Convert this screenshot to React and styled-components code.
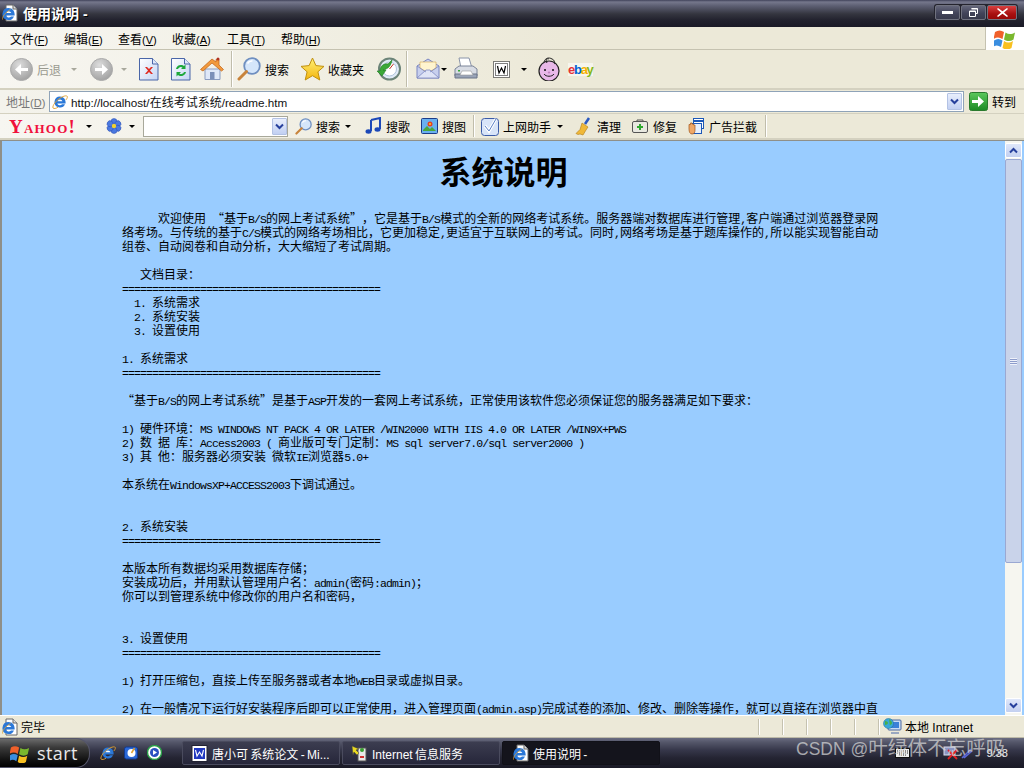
import React from "react";
import styled, { createGlobalStyle } from "styled-components";

const Global = createGlobalStyle`
  html, body { margin: 0; padding: 0; width: 1024px; height: 768px; overflow: hidden; background: #ece9d8; }
  * { box-sizing: border-box; }
`;

const UI = `"Liberation Sans", "Noto Sans CJK SC", sans-serif`;
const Win = styled.div`
  position: relative; width: 1024px; height: 768px; display: flex; flex-direction: column;
  font-family: ${UI}; font-size: 12px; color: #000; overflow: hidden;
`;
const TitleBar = styled.div`
  height: 27px; flex: none; display: flex; align-items: center; padding: 0 5px 2px 2px;
  background: linear-gradient(#40425a 0, #75778c 2px, #5c5e72 6px, #34353f 14px, #22222e 20px, #1a1a26 100%);
`;
const TitleText = styled.span`
  margin-left: 5px; color: #fff; font-weight: 700; font-size: 14px; text-shadow: 1px 1px 0 #000; flex: 1;
`;
const WinButtons = styled.div`display: flex; gap: 1px; margin-right: 1px; padding: 1px; background: #24242e; border-radius: 3px;`;
const WinBtn = styled.div`
  width: ${p => p.$w}px; height: 15px; border-radius: 2px; display: flex; align-items: center; justify-content: center;
  border: 1px solid #70727f;
  background: ${p => p.$red ? "linear-gradient(#d84040,#a81010 60%,#980808)" : "linear-gradient(#64667a,#42445a 55%,#383a4c)"};
`;
const MenuBar = styled.div`
  height: 23px; flex: none; display: flex; align-items: center; padding-left: 10px;
  background: linear-gradient(90deg, #f7f6f1, #ece9d8 55%); border-bottom: 1px solid #c5c2b0;
`;
const MenuItem = styled.span`width: ${p => p.$w}px; flex: none;`;
const KeyHint = styled.span`font-size: 11px; color: inherit;`;
const FlagCell = styled.div`
  margin-left: auto; width: 39px; height: 23px; background: #fff; border-left: 1px solid #c5c2b0;
  display: flex; align-items: center; justify-content: center;
`;
const ToolBar = styled.div`
  height: 40px; flex: none; display: flex; align-items: center; border-bottom: 2px solid #d4d1c0;
  background: linear-gradient(90deg, #f7f6f1, #ece9d8 55%);
`;
const Tool = styled.div`
  margin-left: ${p => p.$ml || 0}px; flex: none; display: flex; align-items: center; gap: ${p => p.$gap ?? 5}px;
  color: ${p => p.$dim ? "#9a9a90" : "#000"};
`;
const Sep = styled.div`
  margin-left: ${p => p.$ml || 0}px; width: 2px; height: ${p => p.$h || 36}px; flex: none;
  border-left: 1px solid #c0bdab; border-right: 1px solid #fff;
`;
const Caret = styled.div`
  margin-left: ${p => p.$ml || 0}px; flex: none; width: 0; height: 0;
  border-left: 3px solid transparent; border-right: 3px solid transparent;
  border-top: 3px solid ${p => p.$dim ? "#a8a89c" : "#000"};
`;
const AddressBar = styled.div`
  height: 24px; flex: none; display: flex; align-items: center; padding-left: 6px;
  background: linear-gradient(90deg, #f4f3ec, #ece9d8 55%); border-bottom: 1px solid #d4d1c0;
`;
const AddrLabel = styled.span`color: #777; width: 43px; flex: none;`;
const AddrBox = styled.div`
  width: 915px; height: 21px; flex: none; display: flex; align-items: center; background: #fff;
  border: 1px solid #8fa3b8; padding: 0 1px 0 2px;
`;
const UrlText = styled.span`margin-left: 3px; flex: 1; font-size: 12px; color: #111;`;
const UrlLatin = styled.span`font-size: 11.7px;`;
const DropBtn = styled.div`
  width: 15px; height: 17px; flex: none; display: flex; align-items: center; justify-content: center;
  background: linear-gradient(#e8eefc, #c2d0f2); border: 1px solid #b3c2e4; border-radius: 1px;
`;
const LinkBar = styled.div`
  height: 26px; flex: none; display: flex; align-items: center; border-bottom: 2px solid #d4d1c0;
  background: linear-gradient(90deg, #f7f6f1, #ece9d8 55%);
`;
const Yahoo = styled.span`
  margin-left: 9px; width: 70px; flex: none; font-family: "Liberation Serif", serif; font-size: 19px; line-height: 1;
  color: #f0103c; font-weight: 700; font-variant: small-caps; letter-spacing: 1.2px; white-space: nowrap;
`;
const Small = styled.span`font-size: 12px;`;
const SearchBox = styled.div`
  margin-left: ${p => p.$ml}px; width: 145px; height: 21px; flex: none; background: #fff; border: 1px solid #a8a89a;
  display: flex; align-items: center; justify-content: flex-end; padding-right: 0;
`;
const Main = styled.div`
  height: 575px; flex: none; display: flex; background: #99ccff;
  border-left: 2px solid #8f8f88; border-top: 1px solid #8f8f88;
`;
const Page = styled.div`
  flex: 1; overflow: hidden; padding-left: 120px; white-space: pre;
`;
const Heading = styled.h1`
  margin: 8px 0 20px -120px; text-align: center; height: 42px; line-height: 42px; font-size: 32px; font-weight: 700;
  font-family: "Noto Sans CJK SC", sans-serif; color: #000;
`;
const Line = styled.div`
  height: 14px; line-height: 14px; font-size: 12px; color: #000; font-family: "Noto Sans CJK SC", sans-serif;
`;
const Latin = styled.span`font-family: "Liberation Mono", monospace; font-size: 11.5px; letter-spacing: -0.9px;`;
const Full = styled.span`display: inline-block; width: 12px; text-align: ${p => p.$a};`;
const Scroll = styled.div`
  width: 17px; flex: none; margin-right: 2px; display: flex; flex-direction: column; background: #f6f6f0; padding: 2px 0 2px;
`;
const ScrollBtn = styled.div`
  height: 15px; flex: none; border: 1px solid #fff; background: linear-gradient(#dfe7fa, #c3d0f0); border-radius: 2px;
  display: flex; align-items: center; justify-content: center;
`;
const Track = styled.div`flex: 1; display: flex; flex-direction: column; padding-top: 1px;`;
const Thumb = styled.div`
  height: 404px; flex: none; border: 1px solid #9aa8d2; border-radius: 2px; background: #c9d3ea;
  display: flex; align-items: center; justify-content: center;
`;
const Grip = styled.div`width: 7px; height: 7px; background: repeating-linear-gradient(#eef1fa 0 1px, #8d9ccb 1px 2px);`;
const Status = styled.div`
  height: 23px; flex: none; display: flex; align-items: center; padding-left: 2px; background: #ece9d8;
  border-top: 1px solid #fff; border-bottom: 1px solid #bdbaa8;
`;
const StatusText = styled.span`margin-left: 3px; width: 737px; flex: none;`;
const StatusCell = styled.div`
  width: 24px; height: 16px; flex: none; border-left: 1px solid #c5c2b0; box-shadow: inset 1px 0 0 #fff;
`;
const Taskbar = styled.div`
  flex: 1; display: flex; align-items: center;
  background: linear-gradient(#6a6c80 0, #55576a 4px, #36374a 12px, #242432 20px, #1a1a26 100%);
`;
const StartBtn = styled.div`
  width: 90px; height: 30px; flex: none; display: flex; align-items: center; padding-left: 10px; gap: 7px;
  border-radius: 0 14px 14px 0; border: 1px solid #55566a; border-left: 0;
  background: linear-gradient(#6a6a6a, #3a3a3a 30%, #111 75%, #000);
  color: #e8e8e8; font-family: "Open Sans", sans-serif; font-size: 18px; letter-spacing: .4px;
`;
const Quick = styled.div`margin-left: 10px; width: 82px; flex: none; display: flex; gap: 8px;`;
const Task = styled.div`
  width: 158px; height: 24px; flex: none; margin-right: 2px; display: flex; align-items: center; padding-left: ${p => p.$active ? 10 : 8}px; gap: 4px;
  border: 1px solid ${p => p.$active ? "#111118" : "#4a4b5e"}; border-radius: 2px; color: #fff; font-size: 12px; white-space: nowrap; overflow: hidden; word-spacing: -1px;
  background: ${p => p.$active ? "#14141c" : "linear-gradient(#3c3d50,#26263a)"};
`;
const Tray = styled.div`margin-left: auto; display: flex; align-items: center; color: #eee; font-size: 11px; padding-right: 16px;`;
const TrayGap = styled.div`width: ${p => p.$w}px; flex: none;`;
const Watermark = styled.div`
  position: absolute; left: 796px; top: 736px; font-size: 17.5px; line-height: 24px; color: rgba(215,215,215,.72); white-space: nowrap;
  font-family: "Liberation Sans", "Noto Sans CJK SC", sans-serif;
`;
const WatermarkCjk = styled.span`font-size: 19.6px;`;

/* ---------- drawn icons ---------- */
const IE = ({ s = 16 }) => (
  <svg width={s} height={s} viewBox="0 0 16 16">
    <path d="M2 8.500h9.500C11.500 6 10 4.800 8 4.800 5.600 4.800 3.800 6.300 2.700 8.300" fill="#fff" />
    <path d="M8 2.500a5.500 5.500 0 1 0 5 7.800h-3a2.700 2.700 0 0 1-4.700-.9h8.300c.4-3.800-2-6.900-5.600-6.900zM5.500 7.200a2.700 2.700 0 0 1 5 0z" fill="#2b78d8" fillRule="evenodd" />
    <path d="M1 14c-1-2 3-8 9-11 3-1.500 5-1.500 5.300-.5.300 1-.4 2.300-1.500 3.500M1 14c1 1 3 .5 5-.8" fill="none" stroke="#e0a030" strokeWidth=".9" />
  </svg>
);
const PageIE = () => (
  <svg width="16" height="18" viewBox="0 0 16 18">
    <path d="M4 1h7l4 4v12H4z" fill="#fff" stroke="#666" />
    <path d="M11 1v4h4" fill="#ddd" stroke="#666" />
    <path d="M6.500 4a6 6 0 1 0 5.500 8.400H9a3 3 0 0 1-5.200-1h8.800C13 7.300 10.500 4 6.500 4zM3.900 9a3 3 0 0 1 5.400 0z" fill="#2b78d8" fillRule="evenodd" />
    <path d="M.5 15.500c-.8-2 3-7.500 8-10" fill="none" stroke="#e0a030" strokeWidth=".8" />
  </svg>
);
const Circle = ({ flip }) => (
  <svg width="23" height="23" viewBox="0 0 23 23">
    <defs><radialGradient id={flip ? "cf" : "cb"} cx=".4" cy=".3" r=".8"><stop offset="0" stopColor="#ddd" /><stop offset="1" stopColor="#9a9a9a" /></radialGradient></defs>
    <circle cx="11.500" cy="11.500" r="11" fill={`url(#${flip ? "cf" : "cb"})`} stroke="#aaa" />
    <path d={flip ? "M5 10h7V6l6 5.500-6 5.500v-4H5z" : "M18 10h-7V6l-6 5.500 6 5.500v-4h7z"} fill="#fff" />
  </svg>
);
const Doc = ({ children }) => (
  <svg width="20" height="24" viewBox="0 0 20 24">
    <defs><linearGradient id="dg" x1="0" y1="0" x2="1" y2="1"><stop offset="0" stopColor="#fff" /><stop offset="1" stopColor="#c4d4f4" /></linearGradient></defs>
    <path d="M.5 1.500h13l5.500 5.500v16H.5z" fill="url(#dg)" stroke="#4a66a8" />
    <path d="M13.500 1.500v5.500H19" fill="#dfe7fa" stroke="#4a66a8" />
    {children}
  </svg>
);
const Home = () => (
  <svg width="24" height="24" viewBox="0 0 24 24">
    <path d="M5 12v10.500h15V12z" fill="#dfe8f8" stroke="#8a9cc0" />
    <path d="M10 15h4.500v7.500H10z" fill="#7b8fb8" />
    <path d="M0.500 12.500 12 2l4 3V2.500h3v5.500l4.500 4.500-2 1.500L12 6 3 14z" fill="#f29a3c" stroke="#c46a1e" strokeWidth=".8" />
    <circle cx="18" cy="2" r="1.500" fill="#b03020" />
  </svg>
);
const Magnifier = ({ s = 24 }) => (
  <svg width={s} height={s} viewBox="0 0 24 24">
    <circle cx="15" cy="9" r="7.800" fill="#d5e6fa" stroke="#6f8fc0" strokeWidth="1.800" />
    <path d="M10.500 6.500a5 5 0 0 1 5-2.500" stroke="#fff" strokeWidth="1.600" fill="none" />
    <path d="M9.500 14.500 2 22" stroke="#c8843c" strokeWidth="3" strokeLinecap="round" />
  </svg>
);
const Star = () => (
  <svg width="25" height="24" viewBox="0 0 25 24">
    <defs><linearGradient id="st" x1="0" y1="0" x2="0" y2="1"><stop offset="0" stopColor="#fff27a" /><stop offset="1" stopColor="#f4b40c" /></linearGradient></defs>
    <path d="M12.500 1l3.400 7.600 8.100.8-6.100 5.400 1.900 8.200-7.300-4.300-7.300 4.300 1.900-8.200L1 9.400l8.100-.8z" fill="url(#st)" stroke="#c09010" />
  </svg>
);
const History = () => (
  <svg width="25" height="24" viewBox="0 0 25 24">
    <circle cx="13.500" cy="12" r="10.500" fill="#e0eaf6" stroke="#6c8478" strokeWidth="2" />
    <circle cx="13.500" cy="12" r="7" fill="#fff" stroke="#b0c4dc" />
    <path d="M13.500 12l4-5" stroke="#c03020" strokeWidth="1" />
    <path d="M1 14h3c0-5 4-8 8-7l4-4c-1 6-4 9-9 10h3l-4 6z" fill="#3aa838" stroke="#1e7a22" strokeWidth=".6" />
  </svg>
);
const Mail = () => (
  <svg width="24" height="24" viewBox="0 0 24 24">
    <path d="M1 9l11-7 11 7v12H1z" fill="#c8d0ee" stroke="#7b86c0" />
    <path d="M4 11V5h16v6l-8 5z" fill="#fff4cf" stroke="#d8b060" strokeWidth=".7" />
    <path d="M1 21l9-8h4l9 8zM1 9l9 6M23 9l-9 6" fill="#dfe4f6" stroke="#7b86c0" strokeWidth=".8" />
  </svg>
);
const Printer = () => (
  <svg width="24" height="24" viewBox="0 0 24 24">
    <path d="M5 1h10l3 10H7z" fill="#fff" stroke="#8a94a8" />
    <path d="M1 12l4-3h14l4 3v7H1z" fill="#d8dce4" stroke="#7a8498" />
    <path d="M1 17h22v4H1z" fill="#9aa4b8" stroke="#6a7488" />
    <path d="M6 18l2-4h9l2 4z" fill="#fff" stroke="#999" strokeWidth=".6" />
    <rect x="4" y="13" width="2" height="1.500" fill="#3aa838" />
  </svg>
);
const WordBox = () => (
  <svg width="17" height="17" viewBox="0 0 17 17">
    <rect x=".5" y=".5" width="16" height="16" fill="#fff" stroke="#000" strokeDasharray="1 1" />
    <rect x="2.500" y="2.500" width="12" height="12" fill="#fff" stroke="#000" strokeDasharray="1 1" />
    <path d="M4.500 5l1.500 7 2.500-5 2.500 5 1.500-7" fill="none" stroke="#000" strokeWidth="1.200" />
  </svg>
);
const Pig = () => (
  <svg width="24" height="24" viewBox="0 0 24 24">
    <circle cx="12" cy="14" r="10" fill="#e8b8e8" stroke="#222" strokeWidth="1.200" />
    <path d="M7 5C8 1 12 0 15 2c3 1 3 5 2 5M10 6c-2-3 0-5 2-4" fill="none" stroke="#222" />
    <circle cx="8" cy="13" r="1" fill="#111" /><circle cx="16" cy="13" r="1" fill="#111" />
    <ellipse cx="12" cy="15.500" rx="1.200" ry="1" fill="#c080c0" />
    <path d="M7 17c2 3 8 3 10 0" fill="none" stroke="#222" />
  </svg>
);
const Ebay = styled.span`
  font-family: "Liberation Sans", sans-serif; font-weight: 700; font-size: 13px; letter-spacing: -1.300px; line-height: 1; background: #fff8;
`;
const EbayLetter = styled.span`color: ${p => p.$c};`;
const Flag = ({ s = 22 }) => (
  <svg width={s} height={s} viewBox="0 0 22 22">
    <path d="M1 5c3-2 6-2 9 0l-1.500 7c-3-2-6-2-9 0z" fill="#f0602a" />
    <path d="M11.500 5.500c3 2 6 2 9.500 0l-1.500 7c-3 2-6 2-9.500 0z" fill="#7ab82e" />
    <path d="M0 13.500c3-2 5.500-2 8.500 0L7 20c-3-2-5.500-2-8.500 0z" fill="#3a8ee0" />
    <path d="M10 14c3 2 6 2 9 0l-1.500 7c-3 2-6 2-9 0z" fill="#f8c020" />
  </svg>
);
const Chevron = ({ up }) => (
  <svg width="9" height="7" viewBox="0 0 9 7">
    <path d={up ? "M1 5.500 4.500 2 8 5.500" : "M1 1.500 4.500 5 8 1.500"} fill="none" stroke="#27409c" strokeWidth="2" />
  </svg>
);
const GoIcon = () => (
  <svg width="19" height="19" viewBox="0 0 19 19">
    <defs><linearGradient id="go" x1="0" y1="0" x2="0" y2="1"><stop offset="0" stopColor="#5cc85c" /><stop offset="1" stopColor="#1c8a24" /></linearGradient></defs>
    <rect x=".5" y=".5" width="18" height="18" rx="2" fill="url(#go)" stroke="#2a7a2e" />
    <path d="M3 8h6V4l6 5.500L9 15v-4H3z" fill="#fff" />
  </svg>
);
const FlowerIcon = () => (
  <svg width="16" height="16" viewBox="0 0 16 16">
    {[0, 60, 120, 180, 240, 300].map(a => <circle key={a} cx="8" cy="3.500" r="3" fill="#4a78e0" stroke="#2a4cb0" strokeWidth=".5" transform={`rotate(${a} 8 8)`} />)}
    <circle cx="8" cy="8" r="2.200" fill="#f0d030" />
  </svg>
);
const Music = () => (
  <svg width="17" height="18" viewBox="0 0 17 18">
    <path d="M6 3l9-2v11M6 3v11" fill="none" stroke="#1c48b8" strokeWidth="2" />
    <ellipse cx="3.500" cy="14.500" rx="3" ry="2.200" fill="#1c48b8" />
    <ellipse cx="12.500" cy="12.500" rx="3" ry="2.200" fill="#1c48b8" />
  </svg>
);
const Picture = () => (
  <svg width="17" height="16" viewBox="0 0 17 16">
    <rect x=".5" y=".5" width="16" height="15" rx="1" fill="#6ab0f0" stroke="#1c3c88" />
    <path d="M2 12l4-4 3 3 2-2 4 4H2z" fill="#4aa83c" />
    <circle cx="9" cy="6" r="2.500" fill="#e84020" /><circle cx="9" cy="6" r="1" fill="#f8d020" />
  </svg>
);
const Check = () => (
  <svg width="18" height="19" viewBox="0 0 18 19">
    <rect x=".5" y="1.500" width="17" height="17" rx="3" fill="#d8e4f8" stroke="#3c5ca8" />
    <path d="M4 9l4 5 7-12" fill="none" stroke="#fff" strokeWidth="3" />
    <path d="M4 9l4 5 7-12" fill="none" stroke="#5a80c8" strokeWidth="1" />
  </svg>
);
const Broom = () => (
  <svg width="17" height="19" viewBox="0 0 17 19">
    <path d="M10 7l4-6" stroke="#2a58c0" strokeWidth="2.500" />
    <path d="M7 6l6 4-2 3-3 5-3-1-2 .5-2-1 4-4z" fill="#f0b838" stroke="#b07c18" strokeWidth=".6" />
  </svg>
);
const Kit = () => (
  <svg width="16" height="14" viewBox="0 0 16 14">
    <rect x=".5" y="2.500" width="15" height="11" rx="1.500" fill="#e8e8e0" stroke="#555" />
    <path d="M5 2.500V1h6v1.500" fill="none" stroke="#555" />
    <path d="M7 5h2v2h2v2H9v2H7V9H5V7h2z" fill="#2ea82e" />
  </svg>
);
const AdBlock = () => (
  <svg width="16" height="17" viewBox="0 0 16 17">
    <rect x="5.500" y=".5" width="10" height="10" fill="#fff" stroke="#1c58b8" /><path d="M5.500 3h10" stroke="#1c58b8" strokeWidth="2" />
    <rect x="3.500" y="5.500" width="10" height="10" fill="#e8f0fc" stroke="#1c58b8" />
    <path d="M1 11V6.500h1.500V5H4v1h1.500v1H7v5c0 2.500-1 4-3 4s-3-2-3-5z" fill="#f0a868" stroke="#a05418" strokeWidth=".7" />
  </svg>
);
const Globe = () => (
  <svg width="19" height="18" viewBox="0 0 19 18">
    <rect x="5" y="2" width="13" height="10" rx="1" fill="#c8dcf4" stroke="#4a68a0" />
    <rect x="7" y="4" width="9" height="6" fill="#3a80d8" />
    <path d="M8 14h8v2H8z" fill="#9aa8c0" />
    <circle cx="5.500" cy="5.500" r="5" fill="#38a8d8" stroke="#1c6c98" strokeWidth=".5" />
    <path d="M2 3c2 0 3 1 3 2s-2 2-3 2M6 1c1 1 3 2 3 4s-2 1-2 3" fill="#48b048" />
  </svg>
);
const WordDoc = () => (
  <svg width="17" height="17" viewBox="0 0 17 17">
    <rect x="1" y=".5" width="15" height="16" fill="#fff" stroke="#223" />
    <rect x="3" y="3" width="11" height="11" fill="#2038c0" />
    <path d="M4.500 5l1.500 6 2.500-4 2.500 4 1.500-6" fill="none" stroke="#fff" strokeWidth="1.100" />
  </svg>
);
const IIS = () => (
  <svg width="17" height="17" viewBox="0 0 17 17">
    <rect x="7" y="3" width="8" height="13" fill="#e8e8e8" stroke="#555" />
    <rect x="9" y="11" width="4" height="2" fill="#d03030" />
    <path d="M1 1l7 3-3 1 3 3-2 2-3-3-1 3z" fill="#e8d820" stroke="#444" strokeWidth=".5" />
    <circle cx="11" cy="5" r="2" fill="#38a030" />
  </svg>
);
const Restore = () => (
  <svg width="9" height="9" viewBox="0 0 9 9"><path d="M2.500.5h6v5h-2M.5 3h6v5.500h-6z M.5 3.500h6M2.500 1h6" fill="none" stroke="#fff" /></svg>
);
const Media = () => (
  <svg width="15" height="15" viewBox="0 0 15 15">
    <circle cx="7.500" cy="7.500" r="7" fill="#fff" stroke="#2aa048" strokeWidth="1.400" />
    <circle cx="7.500" cy="7.500" r="4.500" fill="#2a50c0" /><path d="M6 5l4 2.500L6 10z" fill="#fff" />
  </svg>
);
const Outlook = () => (
  <svg width="15" height="15" viewBox="0 0 15 15">
    <rect x=".5" y="2" width="13" height="12" rx="2" fill="#2a68d8" stroke="#123a90" />
    <circle cx="7.500" cy="8" r="4" fill="#fff" /><path d="M7.500 8l3-5" stroke="#e0a030" strokeWidth="1.500" />
  </svg>
);
const Keyboard = () => (
  <svg width="15" height="10" viewBox="0 0 15 10">
    <rect x=".5" y=".5" width="14" height="9" fill="#eee" stroke="#111" />
    <path d="M2 3h11M2 5h11M4 7h7" stroke="#222" strokeDasharray="1 1" />
  </svg>
);
const NetOff = () => (
  <svg width="16" height="14" viewBox="0 0 16 14">
    <rect x="1" y="1" width="11" height="8" fill="#8a94c0" stroke="#dde" />
    <path d="M5 4l9 9M14 4l-9 9" stroke="#e02020" strokeWidth="1.800" />
  </svg>
);
const Pen = () => (
  <svg width="12" height="12" viewBox="0 0 12 12"><path d="M1 11 10 2M3 11l8-7" stroke="#5a68d8" strokeWidth="1.500" /></svg>
);

/* ---------- text ---------- */
const rule = "=".repeat(43);
const doc = [
  "      欢迎使用 “基于B/S的网上考试系统”，它是基于B/S模式的全新的网络考试系统。服务器端对数据库进行管理,客户端通过浏览器登录网",
  "络考场。与传统的基于C/S模式的网络考场相比，它更加稳定,更适宜于互联网上的考试。同时,网络考场是基于题库操作的,所以能实现智能自动",
  "组卷、自动阅卷和自动分析，大大缩短了考试周期。",
  "",
  "   文档目录：",
  rule,
  "  1. 系统需求",
  "  2. 系统安装",
  "  3. 设置使用",
  "",
  "1. 系统需求",
  rule,
  "",
  "“基于B/S的网上考试系统”是基于ASP开发的一套网上考试系统，正常使用该软件您必须保证您的服务器满足如下要求：",
  "",
  "1) 硬件环境：MS WINDOWS NT PACK 4 OR LATER /WIN2000 WITH IIS 4.0 OR LATER /WIN9X+PWS",
  "2) 数 据 库：Access2003 ( 商业版可专门定制：MS sql server7.0/sql server2000 )",
  "3) 其 他：服务器必须安装 微软IE浏览器5.0+",
  "",
  "本系统在WindowsXP+ACCESS2003下调试通过。",
  "",
  "",
  "2. 系统安装",
  rule,
  "",
  "本版本所有数据均采用数据库存储；",
  "安装成功后，并用默认管理用户名：admin(密码:admin)；",
  "你可以到管理系统中修改你的用户名和密码，",
  "",
  "",
  "3. 设置使用",
  rule,
  "",
  "1) 打开压缩包，直接上传至服务器或者本地WEB目录或虚拟目录。",
  "",
  "2) 在一般情况下运行好安装程序后即可以正常使用，进入管理页面(admin.asp)完成试卷的添加、修改、删除等操作，就可以直接在浏览器中直",
];

const Runs = ({ text }) =>
  text.split(/([\x20-\x7e]+|[“”])/).filter(Boolean).map((r, i) => {
    if (r === "“") return <Full key={i} $a="right">{r}</Full>;
    if (r === "”") return <Full key={i} $a="left">{r}</Full>;
    return /^[\x20-\x7e]/.test(r) ? <Latin key={i}>{r}</Latin> : <span key={i}>{r}</span>;
  });

const Key = ({ k }) => <KeyHint>(<u>{k}</u>)</KeyHint>;
const menus = [["文件", "F", 54], ["编辑", "E", 54], ["查看", "V", 54], ["收藏", "A", 55], ["工具", "T", 54], ["帮助", "H", 54]];

export default function App() {
  return (
    <Win lang="zh-CN">
      <Global />
      <TitleBar>
        <PageIE />
        <TitleText>使用说明 -</TitleText>
        <WinButtons>
          <WinBtn $w={25}><svg width="11" height="3"><rect width="11" height="3" fill="#fff" /></svg></WinBtn>
          <WinBtn $w={25}><Restore /></WinBtn>
          <WinBtn $w={30} $red><svg width="11" height="9" viewBox="0 0 11 9"><path d="M1 0l4.500 3.300L10 0l1 1-4 3.500L11 8l-1 1-4.500-3.300L1 9 0 8l4-3.500L0 1z" fill="#fff" /></svg></WinBtn>
        </WinButtons>
      </TitleBar>

      <MenuBar>
        {menus.map(([t, k, w]) => <MenuItem key={t} $w={w}>{t}<Key k={k} /></MenuItem>)}
        <FlagCell><Flag /></FlagCell>
      </MenuBar>

      <ToolBar>
        <Tool $ml={10} $dim $gap={4}><Circle /><span>后退</span></Tool>
        <Caret $ml={10} $dim />
        <Tool $ml={13}><Circle flip /></Tool>
        <Caret $ml={8} $dim />
        <Tool $ml={12}>
          <Doc><path d="M6 10l2 0 2 2 2-2 2 0-3 3.500 3 3.500-2 0-2-2-2 2-2 0 3-3.500z" fill="#e02a20" /></Doc>
        </Tool>
        <Tool $ml={12}>
          <Doc><path d="M5 12a5 5 0 0 1 8-3l1.500-1.500V12H10l1.500-1.500a3 3 0 0 0-4.500 1.500zM15 15a5 5 0 0 1-8 3l-1.500 1.500V15H10l-1.500 1.500a3 3 0 0 0 4.500-1.500z" fill="#1ea83c" /></Doc>
        </Tool>
        <Tool $ml={9}><Home /></Tool>
        <Sep $ml={7} />
        <Tool $ml={4} $gap={4}><Magnifier /><span>搜索</span></Tool>
        <Tool $ml={11} $gap={3}><Star /><span>收藏夹</span></Tool>
        <Tool $ml={12}><History /></Tool>
        <Sep $ml={5} />
        <Tool $ml={8}><Mail /></Tool>
        <Caret $ml={1} />
        <Tool $ml={7}><Printer /></Tool>
        <Tool $ml={15}><WordBox /></Tool>
        <Caret $ml={11} />
        <Tool $ml={10}><Pig /></Tool>
        <Tool $ml={7}>
          <Ebay>
            <EbayLetter $c="#e53238">e</EbayLetter><EbayLetter $c="#0064d2">b</EbayLetter><EbayLetter $c="#f5af02">a</EbayLetter><EbayLetter $c="#86b817">y</EbayLetter>
          </Ebay>
        </Tool>
      </ToolBar>

      <AddressBar>
        <AddrLabel>地址<Key k="D" /></AddrLabel>
        <AddrBox>
          <IE />
          <UrlText><UrlLatin>http://localhost/</UrlLatin>在线考试系统<UrlLatin>/readme.htm</UrlLatin></UrlText>
          <DropBtn><Chevron /></DropBtn>
        </AddrBox>
        <Tool $ml={5} $gap={4}><GoIcon /><span>转到</span></Tool>
      </AddressBar>

      <LinkBar>
        <Yahoo>Yahoo!</Yahoo>
        <Caret $ml={7} />
        <Tool $ml={14}><FlowerIcon /></Tool>
        <Caret $ml={7} />
        <SearchBox $ml={8}><DropBtn><Chevron /></DropBtn></SearchBox>
        <Tool $ml={7} $gap={4}><Magnifier s={17} /><Small>搜索</Small></Tool>
        <Caret $ml={5} />
        <Tool $ml={14} $gap={4}><Music /><Small>搜歌</Small></Tool>
        <Tool $ml={11} $gap={4}><Picture /><Small>搜图</Small></Tool>
        <Sep $ml={7} $h={22} />
        <Tool $ml={6} $gap={4}><Check /><Small>上网助手</Small></Tool>
        <Caret $ml={6} />
        <Tool $ml={12} $gap={5}><Broom /><Small>清理</Small></Tool>
        <Tool $ml={11} $gap={5}><Kit /><Small>修复</Small></Tool>
        <Tool $ml={11} $gap={5}><AdBlock /><Small>广告拦截</Small></Tool>
        <Sep $ml={8} $h={22} />
      </LinkBar>

      <Main>
        <Page>
          <Heading>系统说明</Heading>
          {doc.map((l, i) => <Line key={i}><Runs text={l} /></Line>)}
        </Page>
        <Scroll>
          <ScrollBtn><Chevron up /></ScrollBtn>
          <Track>
            <Thumb><Grip /></Thumb>
          </Track>
          <ScrollBtn><Chevron /></ScrollBtn>
        </Scroll>
      </Main>

      <Status>
        <PageIE />
        <StatusText>完毕</StatusText>
        <StatusCell /><StatusCell /><StatusCell /><StatusCell /><StatusCell /><StatusCell />
        <Tool $ml={-19} $gap={3}><Globe /><span>本地 Intranet</span></Tool>
      </Status>

      <Taskbar>
        <StartBtn><Flag s={20} />start</StartBtn>
        <Quick><IE s={16} /><Outlook /><Media /></Quick>
        <Task><WordDoc /><span>唐小可 系统论文 - Mi...</span></Task>
        <Task><IIS /><span>Internet 信息服务</span></Task>
        <Task $active><PageIE /><span>使用说明 -</span></Task>
        <Tray>
          <Keyboard /><TrayGap $w={33} /><NetOff /><TrayGap $w={2} /><Pen /><TrayGap $w={14} />9:38
        </Tray>
      </Taskbar>
      <Watermark>CSDN @<WatermarkCjk>叶绿体不忘呼吸</WatermarkCjk></Watermark>
    </Win>
  );
}
